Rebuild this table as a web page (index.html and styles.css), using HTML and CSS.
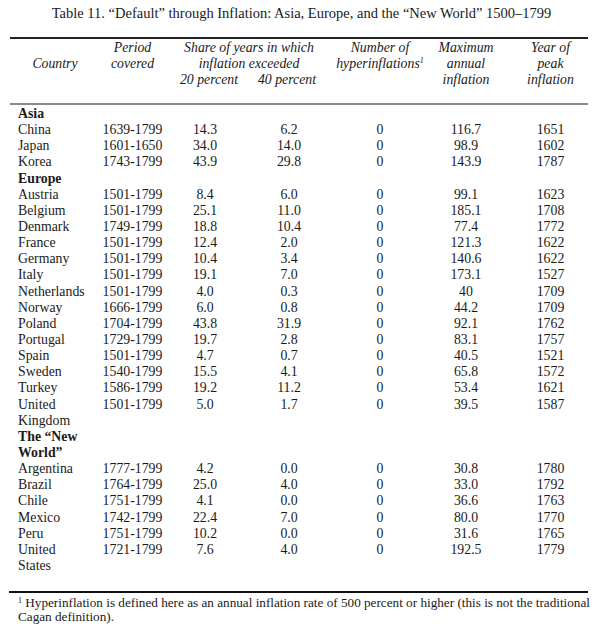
FILE: index.html
```html
<!DOCTYPE html>
<html lang="en">
<head>
<meta charset="utf-8">
<title>Table 11</title>
<link rel="stylesheet" href="styles.css">
</head>
<body>
<div class="page">
  <h1 class="title">Table 11. “Default” through Inflation: Asia, Europe, and the “New World” 1500–1799</h1>
  <table class="data">
    <colgroup>
      <col class="c-country">
      <col class="c-period">
      <col class="c-p20">
      <col class="c-p40">
      <col class="c-hyper">
      <col class="c-max">
      <col class="c-year">
    </colgroup>
    <thead>
      <tr>
        <th rowspan="2" class="h-country">Country</th>
        <th rowspan="2" class="h-top">Period<br>covered</th>
        <th colspan="2" class="h-share">Share of years in which<br>inflation exceeded</th>
        <th rowspan="2" class="h-top">Number of<br>hyperinflations<sup>1</sup></th>
        <th rowspan="2" class="h-top">Maximum<br>annual<br>inflation</th>
        <th rowspan="2" class="h-top h-year">Year of<br>peak<br>inflation</th>
      </tr>
      <tr>
        <th class="h-sub h-20">20 percent</th>
        <th class="h-sub h-40">40 percent</th>
      </tr>
    </thead>
    <tbody>
      <tr class="group first"><td colspan="7">Asia</td></tr>
      <tr><td>China</td><td>1639-1799</td><td>14.3</td><td>6.2</td><td>0</td><td>116.7</td><td>1651</td></tr>
      <tr><td>Japan</td><td>1601-1650</td><td>34.0</td><td>14.0</td><td>0</td><td>98.9</td><td>1602</td></tr>
      <tr><td>Korea</td><td>1743-1799</td><td>43.9</td><td>29.8</td><td>0</td><td>143.9</td><td>1787</td></tr>
      <tr class="group"><td colspan="7">Europe</td></tr>
      <tr><td>Austria</td><td>1501-1799</td><td>8.4</td><td>6.0</td><td>0</td><td>99.1</td><td>1623</td></tr>
      <tr><td>Belgium</td><td>1501-1799</td><td>25.1</td><td>11.0</td><td>0</td><td>185.1</td><td>1708</td></tr>
      <tr><td>Denmark</td><td>1749-1799</td><td>18.8</td><td>10.4</td><td>0</td><td>77.4</td><td>1772</td></tr>
      <tr><td>France</td><td>1501-1799</td><td>12.4</td><td>2.0</td><td>0</td><td>121.3</td><td>1622</td></tr>
      <tr><td>Germany</td><td>1501-1799</td><td>10.4</td><td>3.4</td><td>0</td><td>140.6</td><td>1622</td></tr>
      <tr><td>Italy</td><td>1501-1799</td><td>19.1</td><td>7.0</td><td>0</td><td>173.1</td><td>1527</td></tr>
      <tr><td>Netherlands</td><td>1501-1799</td><td>4.0</td><td>0.3</td><td>0</td><td>40</td><td>1709</td></tr>
      <tr><td>Norway</td><td>1666-1799</td><td>6.0</td><td>0.8</td><td>0</td><td>44.2</td><td>1709</td></tr>
      <tr><td>Poland</td><td>1704-1799</td><td>43.8</td><td>31.9</td><td>0</td><td>92.1</td><td>1762</td></tr>
      <tr><td>Portugal</td><td>1729-1799</td><td>19.7</td><td>2.8</td><td>0</td><td>83.1</td><td>1757</td></tr>
      <tr><td>Spain</td><td>1501-1799</td><td>4.7</td><td>0.7</td><td>0</td><td>40.5</td><td>1521</td></tr>
      <tr><td>Sweden</td><td>1540-1799</td><td>15.5</td><td>4.1</td><td>0</td><td>65.8</td><td>1572</td></tr>
      <tr><td>Turkey</td><td>1586-1799</td><td>19.2</td><td>11.2</td><td>0</td><td>53.4</td><td>1621</td></tr>
      <tr><td>United Kingdom</td><td>1501-1799</td><td>5.0</td><td>1.7</td><td>0</td><td>39.5</td><td>1587</td></tr>
      <tr class="group"><td>The “New World”</td><td colspan="6"></td></tr>
      <tr><td>Argentina</td><td>1777-1799</td><td>4.2</td><td>0.0</td><td>0</td><td>30.8</td><td>1780</td></tr>
      <tr><td>Brazil</td><td>1764-1799</td><td>25.0</td><td>4.0</td><td>0</td><td>33.0</td><td>1792</td></tr>
      <tr><td>Chile</td><td>1751-1799</td><td>4.1</td><td>0.0</td><td>0</td><td>36.6</td><td>1763</td></tr>
      <tr><td>Mexico</td><td>1742-1799</td><td>22.4</td><td>7.0</td><td>0</td><td>80.0</td><td>1770</td></tr>
      <tr><td>Peru</td><td>1751-1799</td><td>10.2</td><td>0.0</td><td>0</td><td>31.6</td><td>1765</td></tr>
      <tr><td>United States</td><td>1721-1799</td><td>7.6</td><td>4.0</td><td>0</td><td>192.5</td><td>1779</td></tr>
    </tbody>
  </table>
  <div class="foot-rule"></div>
  <p class="footnote"><sup class="fn-mark">1</sup> Hyperinflation is defined here as an annual inflation rate of 500 percent or higher (this is not the traditional Cagan definition).</p>
</div>
</body>
</html>
```

FILE: styles.css
```css
html, body {
  margin: 0;
  padding: 0;
  background: #ffffff;
}

body {
  font-family: "Liberation Serif", "Times New Roman", serif;
  color: #1a1a1a;
  font-size: 13.8px;
}

.page {
  padding: 5px 0 0 0;
}

.title {
  margin: 0;
  font-size: 14.5px;
  font-weight: normal;
  line-height: 16px;
  text-align: center;
  padding-left: 2px;
}

.data {
  margin: 16px 0 0 10px;
  width: 578px;
  table-layout: fixed;
  border-collapse: collapse;
  border-top: 2px solid #222;
  line-height: 16.14px;
}

.c-country { width: 90px; }
.c-period  { width: 65px; }
.c-p20     { width: 80px; }
.c-p40     { width: 88px; }
.c-hyper   { width: 94px; }
.c-max     { width: 78px; }
.c-year    { width: 83px; }

.data thead {
  border-bottom: 2px solid #8a8a8a;
}

.data th {
  font-weight: normal;
  font-style: italic;
  padding: 0;
  line-height: 16px;
  text-align: center;
  vertical-align: top;
}

.data thead tr:first-child th {
  padding-top: 1px;
}

.data th.h-country {
  vertical-align: middle;
  padding-top: 0;
  padding-bottom: 15px;
}

.data th.h-top {
  padding-bottom: 15px;
}

.data th.h-year {
  padding-left: 8px;
}

.data th.h-sub {
  padding-bottom: 15px;
}

.data th.h-20 {
  padding-left: 8px;
}

.data th.h-40 {
  padding-right: 4px;
}

.data th sup {
  font-size: 8px;
  line-height: 0;
  vertical-align: 5px;
}

.data td {
  padding: 0;
  text-align: center;
  vertical-align: top;
}

.data td:first-child {
  text-align: left;
  padding-left: 8px;
  padding-right: 12px;
}

.data td:last-child {
  padding-left: 8px;
}

.data tr.group td {
  font-weight: bold;
  padding-left: 8px;
}

.data tr.group.first td {
  padding-top: 1px;
}

.foot-rule {
  margin: 17px 0 0 9px;
  width: 579px;
  height: 2px;
  background: #111;
}

.footnote {
  margin: 3px 0 0 18px;
  width: 578px;
  font-size: 13.2px;
  line-height: 14.2px;
}

.fn-mark {
  font-size: 8px;
  line-height: 1;
  vertical-align: 4px;
}
```
